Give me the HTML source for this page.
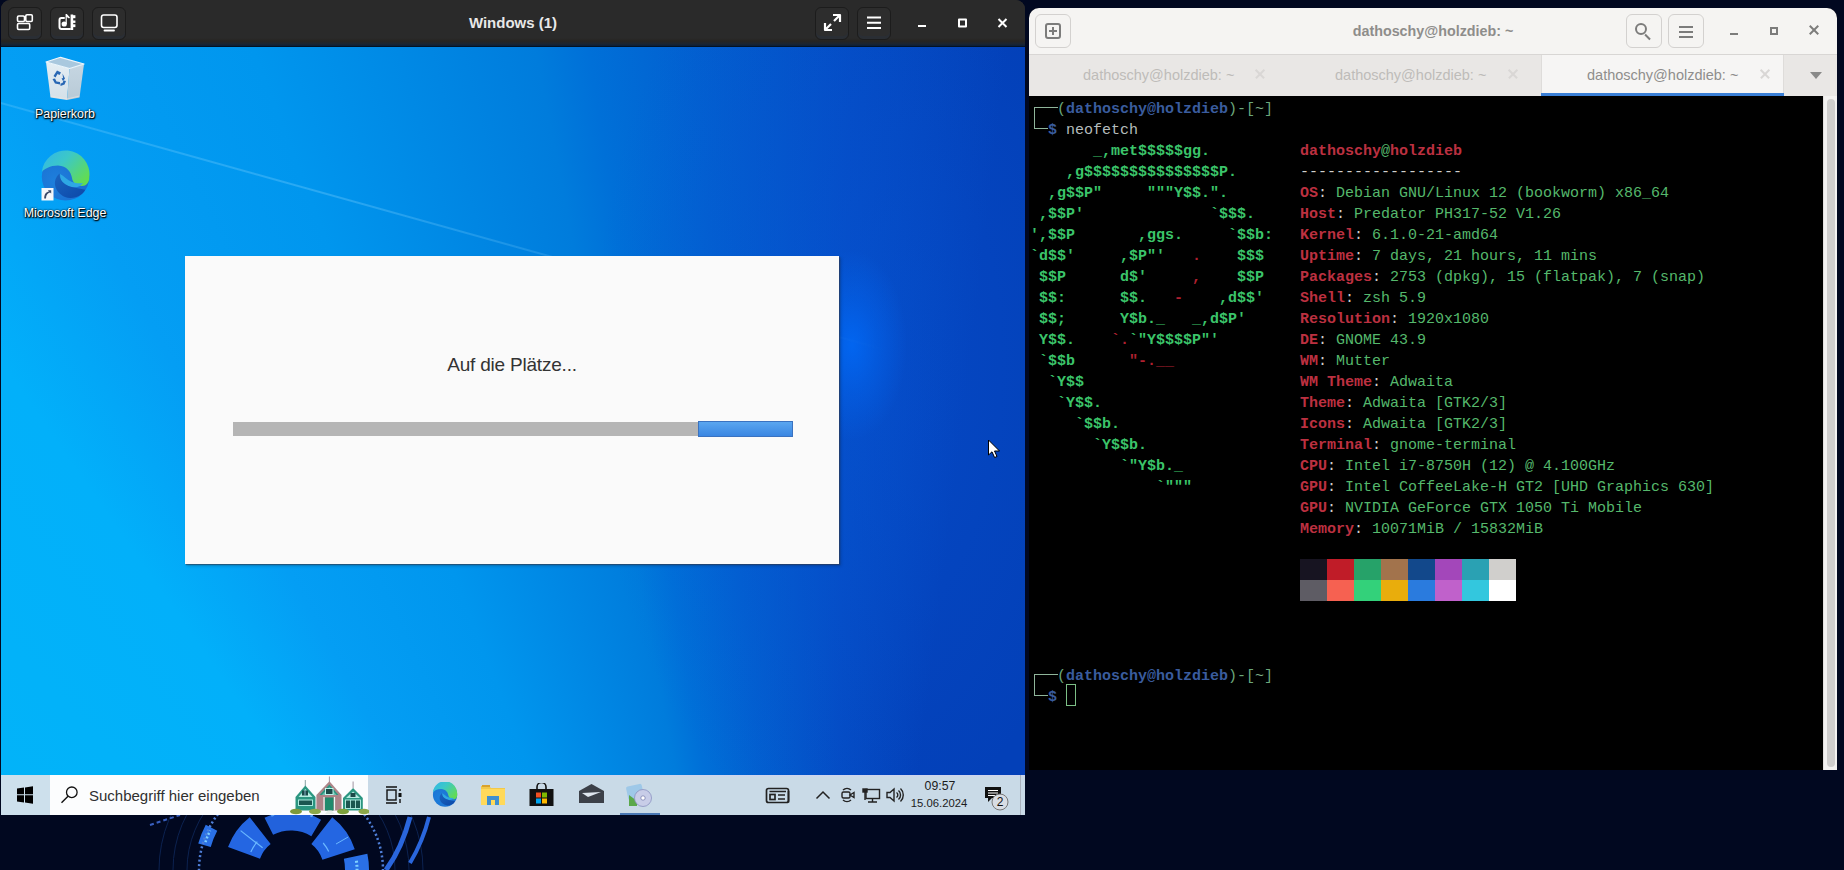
<!DOCTYPE html>
<html><head><meta charset="utf-8">
<style>
*{box-sizing:border-box;margin:0;padding:0}
html,body{width:1844px;height:870px;overflow:hidden}
body{background:#010820;position:relative;font-family:"Liberation Sans",sans-serif}
.abs{position:absolute}
/* ---------- GNOME wallpaper bits ---------- */
#wall{left:0;top:0;width:1844px;height:870px;background:#010820}
/* ---------- Windows VM window ---------- */
#vm{left:1px;top:0;width:1024px;height:815px;border-radius:9px 9px 0 0;overflow:hidden;background:#242424}
#vmhead{left:0;top:0;width:1024px;height:47px;background:linear-gradient(#2a2a2a 0,#2a2a2a 38px,#262421 41px,#1b2532 44px,#0f2036 45.5px,#000c18 47px)}
.hbtn{position:absolute;top:7px;width:34px;height:33px;border-radius:6px;background:#2d2d2d;border:1px solid #1c1c1c;box-shadow:inset 0 -3px 0 rgba(40,48,60,.5)}
#vmtitle{left:0;width:1024px;top:14px;text-align:center;color:#e8e8e8;font-weight:bold;font-size:15px}
#desk{left:0;top:47px;width:1024px;height:728px;overflow:hidden;
 background:
  radial-gradient(ellipse 55px 95px at 851px 298px, rgba(0,110,255,.7), rgba(0,110,255,.35) 45%, rgba(0,110,255,0) 100%),
  radial-gradient(ellipse 260px 480px at 851px 319px, rgba(8,85,215,.45), rgba(8,85,215,0) 100%),
  conic-gradient(from 310deg at 824px 1493px, #02b4f8 0deg, #02b0fa 15deg, #049ef4 21deg, #0096ee 29deg, #007cdc 39deg, #0070d8 41deg, #0260d0 45deg, #044cc4 51deg, #0340b8 57deg, #0340b8 360deg)}
#taskbar{left:0;top:775px;width:1024px;height:40px;background:linear-gradient(#cdd5ee 0,#cdd5ee 1px,#c9dae7 2px)}
/* ---------- Terminal window ---------- */
#term{left:1029px;top:8px;width:808px;height:762px;border-radius:10px 10px 0 0;overflow:hidden;background:#000}
#thead{left:0;top:0;width:808px;height:47px;background:#f5f4f2;border-bottom:1px solid #d8d6d4}
#ttabs{left:0;top:47px;width:808px;height:41px;background:#e9e7e5}
#tcontent{left:0;top:88px;width:794px;height:674px;background:#000;overflow:hidden}
#tscroll{left:794px;top:88px;width:14px;height:674px;background:#f3f2f1;border-left:1px solid #e2e0de}
.mono{font-family:"Liberation Mono",monospace;font-size:15px;line-height:21px;white-space:pre}

#tc{left:1px;top:3px}
.mono span{}
.ag{color:#3bc46a;font-weight:bold}
.ar{color:#b02030;font-weight:bold}
.kr{color:#bc3040;font-weight:bold}
.vg{color:#55b86c}
.cw{color:#d0cfcc}
.pg{color:#6aa67a}
.pb{color:#3a5c9e;font-weight:bold}
.pw{color:#b4bcbc}
.pwb{color:#7fb08a}
#art{left:0;top:42px}
#info{left:270px;top:42px}
#pal{left:270px;top:460px;width:216px;height:42px}
#pal div{float:left;width:27px;height:21px}
#p2{left:0;top:567px}
#cursor{left:36px;top:585px;width:10px;height:22px;border:1px solid #7cbf86}

.tb{position:absolute;top:6px;width:36px;height:34px;border:1px solid #d3d1cf;border-radius:6px;background:#f5f4f2}
.ic{position:absolute;background:#7c7c7b}
.ttitle{position:absolute;left:0;width:808px;top:15px;text-align:center;font-weight:bold;font-size:14.3px;color:#8e8d8b}
.tabt{position:absolute;top:59px;font-size:14.5px;color:#bebcb9}
.tabx{position:absolute;top:59px;width:14px;height:14px}
.tabx:before,.tabx:after{content:"";position:absolute;left:1px;top:6px;width:12px;height:1.6px;background:#d9d7d5;transform:rotate(45deg)}
.tabx:after{transform:rotate(-45deg)}

.wi{position:absolute;color:#fff;font-size:12.4px;text-align:center;text-shadow:0 0 2px #000,1px 1px 1px #000,0 1px 2px rgba(0,0,0,.8)}
#dlg{left:184px;top:209px;width:654px;height:308px;background:#fafafa;box-shadow:1px 1px 1px rgba(50,60,80,.6),2px 2px 3px rgba(0,0,0,.2)}
#dtxt{left:0;width:654px;top:98px;text-align:center;font-size:19px;letter-spacing:-0.2px;color:#333}
</style></head>
<body>
<div id="wall" class="abs"></div>
<svg class="abs" style="left:140px;top:813px" width="320" height="57" viewBox="0 0 320 57"><circle cx="151" cy="57" r="104" stroke="#0c2250" stroke-width="1" fill="none"/><circle cx="151" cy="57" r="118" stroke="#0c2250" stroke-width="1" fill="none"/><circle cx="151" cy="57" r="132" stroke="#0c2250" stroke-width="1" fill="none"/><path d="M128.8 13.3 A49 49 0 0 1 176.2 15.0" stroke="#2262dc" stroke-width="19" fill="none" /><path d="M131.2 2.5 A58 58 0 0 1 172.7 3.2" stroke="#5aa0f5" stroke-width="2.5" fill="none" stroke-dasharray="3 5"/><path d="M104.0 39.9 A50 50 0 0 1 120.2 17.6" stroke="#2466e2" stroke-width="34" fill="none" /><path d="M181.8 17.6 A50 50 0 0 1 198.6 41.5" stroke="#2466e2" stroke-width="34" fill="none" /><path d="M122.6 34.8 L100.6 17.6" stroke="#6ab8ff" stroke-width="1.2"/><path d="M110.8 39.1 A44 44 0 0 1 117.3 28.7" stroke="#6ab8ff" stroke-width="1.2" fill="none" /><path d="M183.2 30.0 A42 42 0 0 1 188.7 38.6" stroke="#6ab8ff" stroke-width="1.2" fill="none" /><path d="M196.0 31.0 L208.2 24.0" stroke="#6ab8ff" stroke-width="1"/><path d="M90.4 92.0 A70 70 0 0 1 81.5 65.5" stroke="#2a70e6" stroke-width="16" fill="none" /><path d="M88.1 87.7 A70 70 0 0 1 82.1 69.2" stroke="#7fd0ff" stroke-width="3" fill="none" stroke-dasharray="2 2"/><path d="M215.6 43.3 A66 66 0 0 1 215.0 73.0" stroke="#2a70e6" stroke-width="24" fill="none" /><path d="M216.4 47.8 A66 66 0 0 1 216.0 68.5" stroke="#7fd0ff" stroke-width="3" fill="none" stroke-dasharray="2 2"/><path d="M64.5 32.2 A90 90 0 0 1 71.5 14.7" stroke="#2a70e6" stroke-width="13" fill="none" /><path d="M65.4 29.2 A90 90 0 0 1 70.1 17.5" stroke="#7fd0ff" stroke-width="2.5" fill="none" stroke-dasharray="2 2"/><path d="M59.5 66.6 A92 92 0 0 1 78.5 0.4" stroke="#4f7fd8" stroke-width="2.5" fill="none" stroke-dasharray="2 2.5"/><path d="M221.5 -2.1 A92 92 0 0 1 242.1 69.8" stroke="#4f7fd8" stroke-width="2.5" fill="none" stroke-dasharray="2 2.5"/><path d="M97.0 -7.3 A84 84 0 0 1 136.4 -25.7" stroke="#1a3a80" stroke-width="1" fill="none" /><path d="M270 4 Q262 35 246 57" stroke="#2a66dc" stroke-width="5" fill="none"/><path d="M289 4 Q283 28 270 50" stroke="#2a66dc" stroke-width="4" fill="none"/><path d="M10 12 L40 2" stroke="#3a60c0" stroke-width="2" stroke-dasharray="4 3"/></svg>

<div id="vm" class="abs">
  <div id="vmhead" class="abs">
    <div class="hbtn" style="left:7px"></div>
    <div class="hbtn" style="left:49px"></div>
    <div class="hbtn" style="left:91px"></div>
    <div id="vmtitle" class="abs">Windows (1)</div>
    <div class="hbtn" style="left:814px"></div>
    <div class="hbtn" style="left:856px"></div>
 <svg class="abs" style="left:0;top:0" width="1024" height="46" viewBox="0 0 1024 46">
  <g fill="none" stroke="#fff" stroke-width="1.6" stroke-linejoin="round">
   <rect x="16.5" y="16" width="7" height="5.5" rx="1.2"/>
   <rect x="24.8" y="14.8" width="6.5" height="6.7" rx="1.2"/>
   <rect x="16.5" y="23.5" width="12.2" height="6" rx="1.2"/>
   <rect x="100.5" y="15" width="15.5" height="12.5" rx="2.2"/>
   <path d="M103.5 30.5 H113" stroke-width="1.8" stroke-linecap="round"/>
   <path d="M824 30 L830 24 M833 21 L839 15 M832 15 H839 V22 M824 23 V30 H831" stroke-width="2.2"/>
   <path d="M866 17.5 H880 M866 22.8 H880 M866 28 H880" stroke-width="2"/>
   <path d="M917 26 H925" stroke-width="2"/>
   <rect x="958" y="19.5" width="7" height="7" stroke-width="2"/>
   <path d="M997.5 19 L1005.5 27 M1005.5 19 L997.5 27" stroke-width="2"/>
  </g>
  <g fill="none" stroke="#fff" stroke-width="2" stroke-linecap="round"><path d="M63 18 H60.5 Q58.5 18 58.5 20 V27 Q58.5 29 60.5 29 H69"/></g>
  <g fill="#fff"><circle cx="63.2" cy="24" r="2.6"/><path d="M64.6 14 L65.8 14 L69 17.5 L68 18.6 L65.8 17 V24 H64.6 Z"/><rect x="69.6" y="14.5" width="2.6" height="15.5"/><rect x="72" y="15.2" width="2.4" height="3"/><rect x="72" y="20.5" width="2.4" height="2.4"/><rect x="72" y="24.3" width="2.4" height="2.8"/></g>
 </svg>
  </div>
  <div id="desk" class="abs">
  <div class="abs" style="left:-40px;top:54.5px;width:960px;height:2px;background:linear-gradient(to right,rgba(140,215,255,.22),rgba(140,215,255,.3) 40%,rgba(140,215,255,0));filter:blur(.4px);transform-origin:40px 0;transform:rotate(15.6deg)"></div>
  <svg class="abs" style="left:40px;top:8px" width="48" height="48" viewBox="41 55 48 48">
   <defs><linearGradient id="rbl" x1="0" y1="0" x2="0" y2="1"><stop offset="0" stop-color="#e4eef4"/><stop offset="1" stop-color="#d4e0e8"/></linearGradient>
   <linearGradient id="rbr" x1="0" y1="0" x2="0" y2="1"><stop offset="0" stop-color="#c6d6e2"/><stop offset="1" stop-color="#b8cad6"/></linearGradient></defs>
   <path d="M46 62 L69.5 68.5 L67 100 L50.5 97.5 Z" fill="url(#rbl)"/>
   <path d="M69.5 68.5 L84 64 L79.5 97.5 L67 100 Z" fill="url(#rbr)"/>
   <path d="M46 62 L60.5 57.3 L84 64 L69.5 68.5 Z" fill="#a9c8de" stroke="#eef6fb" stroke-width="1.2" stroke-linejoin="round"/>
   <path d="M50.5 96 L67 99 L79.5 96" stroke="#f0e6e0" stroke-width="1" fill="none" opacity=".6"/>
   <g fill="#2a68b4">
    <path d="M53.5 76 L57 70.5 L61 72.5 L59.5 75 L57.5 74 L55.5 77.5 Z"/>
    <path d="M62.5 73.5 L65 78.5 L63 81 L61.5 78.5 L63 78 Z"/>
    <path d="M52.5 79 L55 83.5 L60 84.5 L60 82 L56.5 81.5 L55 78.5 Z"/>
    <path d="M60.5 86 L64.5 84.5 L66 81 L63.5 80.5 L62.5 83 L60.5 83.5 Z"/>
   </g>
  </svg>
  <div class="wi" style="left:14px;top:60px;width:100px">Papierkorb</div>
  <svg class="abs" style="left:37px;top:103px" width="54" height="54" viewBox="0 0 54 54">
   <defs>
    <linearGradient id="eg" x1="0" y1="0" x2="1" y2=".7"><stop offset="0" stop-color="#30b4ec"/><stop offset=".45" stop-color="#3cc8c8"/><stop offset="1" stop-color="#62dc52"/></linearGradient>
    <linearGradient id="eb" x1="0" y1="0" x2="1" y2="1"><stop offset="0" stop-color="#1a64c0"/><stop offset="1" stop-color="#0c48a8"/></linearGradient>
    <radialGradient id="el" cx=".3" cy=".6" r=".7"><stop offset="0" stop-color="#1e80dc"/><stop offset="1" stop-color="#1a6cd0"/></radialGradient>
   </defs>
   <circle cx="27.6" cy="26.8" r="23.8" fill="url(#el)"/>
   <path d="M3.8 22 A23.8 23.8 0 0 1 51.4 26.8 C51.4 31 50 34 47 35.5 C42 37 35 35 34 28 C33 22 29 16 20 15.5 C12 15.5 6 19 3.8 22 Z" fill="url(#eg)"/>
   <path d="M22 24 C26 26 29 30 34 32 C38 33.5 42 33.5 45 33 C43 36 40 37.5 36 37.3 C30 37 24 35 22.4 28.6 Z" fill="#2ea8e4"/>
   <path d="M21.7 23.6 C17.5 27 16 32 17.5 37 C19.5 43 25 47.5 32 48 C39 48.3 45 44.5 47.2 39.8 C43 38.8 39 38.3 34.8 37.3 C29 36 24 33 22.4 28.6 C21.8 27 21.6 25 21.7 23.6 Z" fill="url(#eb)"/>
   <rect x="3.5" y="38" width="12" height="12.5" fill="#f4f7fa"/>
   <path d="M6.2 48.5 C6.2 44.5 8 41.8 11 41.5 L9.8 40.2 L13.2 40.2 L13.2 43.6 L12 42.5 C9.5 43 8 45.5 8 48.5 Z" fill="#3a4a6a"/>
  </svg>
  <div class="wi" style="left:14px;top:159px;width:100px">Microsoft Edge</div>
  <div id="dlg" class="abs">
   <div id="dtxt" class="abs">Auf die Plätze...</div>
   <div class="abs" style="left:48px;top:166px;width:466px;height:14px;background:#b5b5b5"></div>
   <div class="abs" style="left:513px;top:165px;width:95px;height:16px;background:linear-gradient(#5aa6f0,#3a86e2);border:1px solid #3a72c0"></div>
  </div>
  <svg class="abs" style="left:986px;top:392px" width="16" height="22" viewBox="0 0 16 22"><path d="M1.5 1 L1.5 16 L5 12.8 L7.6 18.5 L10 17.5 L7.5 12 L12.5 12 Z" fill="#fff" stroke="#000" stroke-width="1"/></svg>
</div>
  <div id="taskbar" class="abs">
  <div class="abs" style="left:0;top:0;width:49px;height:40px;background:#cde0ec"></div>
  <svg class="abs" style="left:15px;top:11px" width="18" height="18" viewBox="0 0 18 18"><path fill="#000" d="M1 2.6 L8 1.6 V8.3 H1 Z M9 1.45 L17 0.3 V8.3 H9 Z M1 9.3 H8 V16.4 L1 15.4 Z M9 9.3 H17 V17.7 L9 16.55 Z"/></svg>
  <div class="abs" style="left:49px;top:0;width:318px;height:40px;background:#fcfdfe"></div>
  <svg class="abs" style="left:58px;top:9px" width="22" height="22" viewBox="0 0 22 22"><circle cx="12.8" cy="8.3" r="5.3" fill="none" stroke="#111" stroke-width="1.3"/><path d="M9 12.2 L2.5 18.8" stroke="#111" stroke-width="1.4"/></svg>
  <div class="abs" style="left:88px;top:12px;font-size:15px;color:#303030;letter-spacing:0px">Suchbegriff hier eingeben</div>
  <svg class="abs" style="left:284px;top:0" width="84" height="40" viewBox="285 775 84 40">
   <path d="M305.3 780 V786" stroke="#6a8a8a" stroke-width=".8"/><path d="M329.4 776.5 V782" stroke="#8a7a8a" stroke-width=".8"/><path d="M353.1 781.5 V788" stroke="#8a7a8a" stroke-width=".8"/>
   <path d="M295.5 810.5 V797 L305.3 785.6 L315.5 797 V810.5 Z" fill="#2b9680"/>
   <path d="M298.5 797 L305.3 789 L312.5 797 Z" fill="#b5ece0"/>
   <rect x="302" y="790.5" width="6" height="5" fill="#1a4a48"/><path d="M305 790.5 V795.5" stroke="#bdf" stroke-width=".7"/>
   <rect x="298.5" y="800" width="14" height="5.5" fill="#1b5650" stroke="#b8f4e8" stroke-width=".9"/>
   <path d="M316.4 810.5 V795 L329.4 781.2 L341.5 795 V810.5 Z" fill="#ad8488"/>
   <path d="M319.5 795 L329.4 784.5 L338.5 795 Z" fill="#2b9680"/>
   <path d="M322 795 L329.4 787 L336.5 795 Z" fill="#a6e6dc" opacity=".55"/>
   <rect x="325.5" y="788.5" width="7.5" height="6" fill="#1a4a48" stroke="#c8fff4" stroke-width=".9"/>
   <rect x="325" y="797.5" width="8.5" height="13" fill="#1f8a6c"/><path d="M324 797 V810.5 M334.5 797 V810.5" stroke="#e8f8f4" stroke-width="1.2"/>
   <path d="M343 810.5 V798 L353.1 788 L362.8 798 V810.5 Z" fill="#2b9680"/>
   <path d="M346 798 L353.1 791.5 L360 798 Z" fill="#b5ece0"/>
   <rect x="350.5" y="793" width="5" height="4" fill="#1a4a48"/>
   <rect x="345.5" y="800" width="15" height="8.5" fill="#1b5650" stroke="#b8f4e8" stroke-width=".9"/><path d="M350.5 800 V808.5 M355.5 800 V808.5" stroke="#b8f4e8" stroke-width=".8"/>
   <path d="M325 814 L328 810.5 H331.5 L335 814 Z" fill="#e8eee8"/>
   <ellipse cx="296" cy="811.5" rx="6" ry="2.8" fill="#7e9a3c"/><ellipse cx="315" cy="811.5" rx="6" ry="2.8" fill="#8ca84a"/><ellipse cx="343" cy="811.5" rx="6" ry="2.8" fill="#7ea23c"/><ellipse cx="364" cy="811.5" rx="5.5" ry="2.8" fill="#8ca84a"/>
  </svg>
  <svg class="abs" style="left:383px;top:10px" width="20" height="20" viewBox="0 0 20 20"><g fill="none" stroke="#111" stroke-width="1.4"><path d="M2 2 H13 M2 18 H13"/><rect x="3" y="5" width="9" height="10"/><path d="M16 4 V6 M16 14 V18"/></g><rect x="14.5" y="8" width="3" height="4" fill="#111"/></svg>
  <svg class="abs" style="left:430.5px;top:7px" width="26" height="26" viewBox="2 2 51 51">
   <circle cx="27.6" cy="26.8" r="23.8" fill="url(#el)"/>
   <path d="M3.8 22 A23.8 23.8 0 0 1 51.4 26.8 C51.4 31 50 34 47 35.5 C42 37 35 35 34 28 C33 22 29 16 20 15.5 C12 15.5 6 19 3.8 22 Z" fill="url(#eg)"/>
   <path d="M22 24 C26 26 29 30 34 32 C38 33.5 42 33.5 45 33 C43 36 40 37.5 36 37.3 C30 37 24 35 22.4 28.6 Z" fill="#2ea8e4"/>
   <path d="M21.7 23.6 C17.5 27 16 32 17.5 37 C19.5 43 25 47.5 32 48 C39 48.3 45 44.5 47.2 39.8 C43 38.8 39 38.3 34.8 37.3 C29 36 24 33 22.4 28.6 C21.8 27 21.6 25 21.7 23.6 Z" fill="url(#eb)"/>
  </svg>
  <svg class="abs" style="left:480px;top:9px" width="24" height="21" viewBox="0 0 24 21"><path d="M0 2 H8 L10 4 H24 V21 H0 Z" fill="#f2c84a"/><path d="M0 5 H24 V21 H0 Z" fill="#ffd95a"/><rect x="1" y="1" width="8" height="2" fill="#d9a22e"/><path d="M6 12 H18 V21 H14 V16 H10 V21 H6 Z" fill="#3f8fd0"/></svg>
  <svg class="abs" style="left:528px;top:8px" width="25" height="23" viewBox="0 0 25 23"><path d="M8 6 V4 A4.5 4.5 0 0 1 17 4 V6" fill="none" stroke="#111" stroke-width="1.6"/><rect x="0.5" y="6" width="24" height="17" fill="#111"/><rect x="7" y="9.5" width="5" height="5" fill="#f25022"/><rect x="13" y="9.5" width="5" height="5" fill="#7fba00"/><rect x="7" y="15.5" width="5" height="5" fill="#00a4ef"/><rect x="13" y="15.5" width="5" height="5" fill="#ffb900"/></svg>
  <svg class="abs" style="left:578px;top:9px" width="25" height="19" viewBox="0 0 25 19"><path d="M0 7 L12.5 0 L25 7 V19 H0 Z" fill="#3c4048"/><path d="M3 9 L22 8 L9 13 Z" fill="#dfe6ee"/></svg>
  <svg class="abs" style="left:624px;top:8px" width="28" height="24" viewBox="0 0 28 24"><rect x="2" y="2" width="16" height="14" rx="2" fill="#9ec8e8" transform="rotate(-12 10 9)"/><path d="M4 12 L12 18 V23 H4 Z" fill="#5aa84a"/><circle cx="18" cy="15" r="8.5" fill="#c8cde8" stroke="#8a90c0" stroke-width=".8"/><circle cx="18" cy="15" r="2.2" fill="#fff" stroke="#7a80b0" stroke-width=".8"/></svg>
  <div class="abs" style="left:619px;top:38px;width:40px;height:2px;background:#4a78b4"></div>
  <svg class="abs" style="left:764px;top:11px" width="26" height="18" viewBox="0 0 26 18"><g fill="none" stroke="#222" stroke-width="1.7"><rect x="1.5" y="2.5" width="22" height="14" rx="2"/><path d="M23.5 5 V16.5 M4.5 5.5 H21"/><rect x="5" y="8.5" width="5" height="5"/><path d="M13 9 H20 M13 13 H20"/></g></svg>
  <svg class="abs" style="left:814px;top:15px" width="16" height="10" viewBox="0 0 16 10"><path d="M1.5 8.5 L8 2 L14.5 8.5" fill="none" stroke="#222" stroke-width="1.5"/></svg>
  <svg class="abs" style="left:839px;top:11px" width="16" height="18" viewBox="0 0 16 18"><g fill="none" stroke="#222" stroke-width="1.4"><path d="M3 4 A6 6 0 0 1 11 4 M3 14 A6 6 0 0 0 11 14"/><rect x="2" y="6" width="8" height="6" rx="1.5"/><path d="M10 9 L14 6.5 V11.5 Z"/></g></svg>
  <svg class="abs" style="left:861px;top:13px" width="19" height="15" viewBox="0 0 19 15"><g fill="none" stroke="#222" stroke-width="1.4"><rect x="4" y="1.5" width="13.5" height="9"/><path d="M10.5 10.5 V13.5 M6 14 H15"/><rect x="1" y="1" width="4" height="3" fill="#222"/><path d="M3 4 V12"/></g></svg>
  <svg class="abs" style="left:885px;top:12px" width="18" height="16" viewBox="0 0 18 16"><g fill="none" stroke="#222" stroke-width="1.4"><path d="M1 5.5 H4 L8 2 V14 L4 10.5 H1 Z"/><path d="M10.5 5.5 A3 3 0 0 1 10.5 10.5 M12.5 3.5 A6 6 0 0 1 12.5 12.5 M14.5 1.5 A9 9 0 0 1 14.5 14.5"/></g></svg>
  <div class="abs" style="left:901px;top:3.5px;width:76px;text-align:center;font-size:12.3px;color:#1c1c1c;line-height:15px">09:57</div><div class="abs" style="left:900px;top:21px;width:76px;text-align:center;font-size:11.3px;color:#1c1c1c;line-height:15px">15.06.2024</div>
  <svg class="abs" style="left:982px;top:11px" width="28" height="26" viewBox="0 0 28 26"><path d="M2 1 H18 V12 H9 L5 16 V12 H2 Z" fill="#111"/><path d="M5 4.5 H15 M5 7 H15 M5 9.5 H12" stroke="#fff" stroke-width="1"/><circle cx="17" cy="16" r="8" fill="#d8dde4" stroke="#777" stroke-width="1"/><text x="17" y="20.3" text-anchor="middle" font-family="Liberation Sans" font-size="12" fill="#111">2</text></svg>
  <div class="abs" style="left:1019px;top:0;width:1px;height:40px;background:#a9b2bd"></div>
</div>
</div>

<div id="term" class="abs">
  <div id="thead" class="abs">
 <div class="tb" style="left:6px"><div class="abs" style="left:9px;top:8px;width:16px;height:16px;border:2px solid #7c7c7b;border-radius:3px"></div><div class="ic" style="left:13px;top:15px;width:8px;height:2px"></div><div class="ic" style="left:16px;top:12px;width:2px;height:8px"></div></div>
 <div class="ttitle">dathoschy@holzdieb: ~</div>
 <div class="tb" style="left:597px"><div class="abs" style="left:8px;top:8px;width:12px;height:12px;border:2px solid #7c7c7b;border-radius:50%"></div><div class="ic" style="left:17px;top:21px;width:7px;height:2.2px;transform:rotate(45deg)"></div></div>
 <div class="tb" style="left:639px"><div class="ic" style="left:10px;top:11px;width:14px;height:2px"></div><div class="ic" style="left:10px;top:16px;width:14px;height:2px"></div><div class="ic" style="left:10px;top:21px;width:14px;height:2px"></div></div>
 <div class="ic" style="left:701px;top:25px;width:8px;height:2px"></div>
 <div class="abs" style="left:741px;top:19px;width:8px;height:8px;border:2px solid #7c7c7b"></div>
 <div class="abs" style="left:780px;top:17px;width:10px;height:10px"><div class="ic" style="left:-1px;top:4px;width:12px;height:2px;transform:rotate(45deg)"></div><div class="ic" style="left:-1px;top:4px;width:12px;height:2px;transform:rotate(-45deg)"></div></div>
</div>
  <div id="ttabs" class="abs">
 <div class="abs" style="left:512px;top:0;width:243px;height:42px;background:#f6f5f4;border-left:1px solid #dedcda;border-right:1px solid #dedcda"></div>
 <div class="abs" style="left:512px;top:38px;width:243px;height:3px;background:#3a7fd6"></div>
 <div class="abs" style="left:755px;top:0;width:53px;height:42px;background:#e9e7e5"></div>
 <div class="abs" style="left:781px;top:17px;width:0;height:0;border-left:6px solid transparent;border-right:6px solid transparent;border-top:7px solid #8a8a89"></div>
</div>
<div class="tabt" style="left:54px">dathoschy@holzdieb: ~</div><div class="tabx" style="left:224px"></div>
<div class="tabt" style="left:306px">dathoschy@holzdieb: ~</div><div class="tabx" style="left:477px"></div>
<div class="tabt" style="left:558px;color:#8f8e8c">dathoschy@holzdieb: ~</div><div class="tabx" style="left:729px"></div>
  <div id="tcontent" class="abs"><div id="tc" class="abs"><div class="abs bx" style="left:4px;top:8px;width:24px;height:22px;border-left:1px solid #8fb59a;border-top:1px solid #8fb59a"></div><div class="abs bx" style="left:4px;top:29px;width:14px;height:1px;background:#8fb59a"></div><div id="p1" class="abs mono" style="left:0;top:0"><span class="pg">   (</span><span class="pb">dathoschy@holzdieb</span><span class="pg">)-[</span><span class="pwb">~</span><span class="pg">]</span>
<span class="pg">  </span><span class="pb">$</span> <span class="pw">neofetch</span></div><div id="art" class="abs mono"><span class="ag">       _,met$$$$$gg.</span>
<span class="ag">    ,g$$$$$$$$$$$$$$$P.</span>
<span class="ag">  ,g$$P"     """Y$$.".</span>
<span class="ag"> ,$$P'              `$$$.</span>
<span class="ag">',$$P       ,ggs.     `$$b:</span>
<span class="ag">`d$$'     ,$P"'   </span><span class="ar">.</span><span class="ag">    $$$</span>
<span class="ag"> $$P      d$'     </span><span class="ar">,</span><span class="ag">    $$P</span>
<span class="ag"> $$:      $$.   </span><span class="ar">-</span><span class="ag">    ,d$$'</span>
<span class="ag"> $$;      Y$b._   _,d$P'</span>
<span class="ag"> Y$$.    </span><span class="ar">`.</span><span class="ag">`"Y$$$$P"'</span>
<span class="ag"> `$$b      </span><span class="ar">"-.__</span>
<span class="ag">  `Y$$</span>
<span class="ag">   `Y$$.</span>
<span class="ag">     `$$b.</span>
<span class="ag">       `Y$$b.</span>
<span class="ag">          `"Y$b._</span>
<span class="ag">              `"""</span></div>
<div id="info" class="abs mono"><span class="kr">dathoschy</span><span class="vg">@</span><span class="kr">holzdieb</span>
<span class="cw">------------------</span>
<span class="kr">OS</span><span class="cw">:</span> <span class="vg">Debian GNU/Linux 12 (bookworm) x86_64</span>
<span class="kr">Host</span><span class="cw">:</span> <span class="vg">Predator PH317-52 V1.26</span>
<span class="kr">Kernel</span><span class="cw">:</span> <span class="vg">6.1.0-21-amd64</span>
<span class="kr">Uptime</span><span class="cw">:</span> <span class="vg">7 days, 21 hours, 11 mins</span>
<span class="kr">Packages</span><span class="cw">:</span> <span class="vg">2753 (dpkg), 15 (flatpak), 7 (snap)</span>
<span class="kr">Shell</span><span class="cw">:</span> <span class="vg">zsh 5.9</span>
<span class="kr">Resolution</span><span class="cw">:</span> <span class="vg">1920x1080</span>
<span class="kr">DE</span><span class="cw">:</span> <span class="vg">GNOME 43.9</span>
<span class="kr">WM</span><span class="cw">:</span> <span class="vg">Mutter</span>
<span class="kr">WM Theme</span><span class="cw">:</span> <span class="vg">Adwaita</span>
<span class="kr">Theme</span><span class="cw">:</span> <span class="vg">Adwaita [GTK2/3]</span>
<span class="kr">Icons</span><span class="cw">:</span> <span class="vg">Adwaita [GTK2/3]</span>
<span class="kr">Terminal</span><span class="cw">:</span> <span class="vg">gnome-terminal</span>
<span class="kr">CPU</span><span class="cw">:</span> <span class="vg">Intel i7-8750H (12) @ 4.100GHz</span>
<span class="kr">GPU</span><span class="cw">:</span> <span class="vg">Intel CoffeeLake-H GT2 [UHD Graphics 630]</span>
<span class="kr">GPU</span><span class="cw">:</span> <span class="vg">NVIDIA GeForce GTX 1050 Ti Mobile</span>
<span class="kr">Memory</span><span class="cw">:</span> <span class="vg">10071MiB / 15832MiB</span></div>
<div id="pal" class="abs"><div style="background:#171421"></div><div style="background:#c01c28"></div><div style="background:#26a269"></div><div style="background:#a2734c"></div><div style="background:#12488b"></div><div style="background:#a347ba"></div><div style="background:#2aa1b3"></div><div style="background:#d0cfcc"></div><div style="background:#5e5c64"></div><div style="background:#f66151"></div><div style="background:#33d17a"></div><div style="background:#e9ad0c"></div><div style="background:#2a7bde"></div><div style="background:#c061cb"></div><div style="background:#33c7de"></div><div style="background:#ffffff"></div></div><div class="abs bx" style="left:4px;top:575px;width:24px;height:22px;border-left:1px solid #8fb59a;border-top:1px solid #8fb59a"></div><div class="abs bx" style="left:4px;top:596px;width:14px;height:1px;background:#8fb59a"></div><div id="p2" class="abs mono"><span class="pg">   (</span><span class="pb">dathoschy@holzdieb</span><span class="pg">)-[</span><span class="pwb">~</span><span class="pg">]</span>
<span class="pg">  </span><span class="pb">$</span> </div><div id="cursor" class="abs"></div></div></div>
  <div id="tscroll" class="abs"><div class="abs" style="left:2.5px;top:3px;width:8px;height:668px;border-radius:4px;background:#cfcecd"></div></div>
</div>
</body></html>
